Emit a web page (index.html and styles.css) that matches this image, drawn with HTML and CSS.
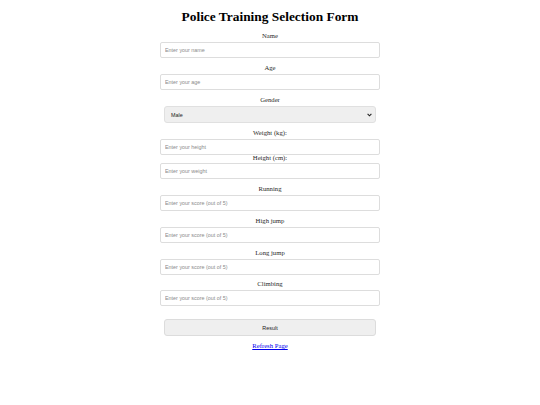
FILE: index.html
```html
<!DOCTYPE html>
<html>
<head>
<meta charset="utf-8">
<title>Police Training Selection Form</title>
<link rel="stylesheet" href="styles.css">
</head>
<body>
<h1 class="title">Police Training Selection Form</h1>
<form class="form">
  <div class="field">
    <label class="label">Name</label>
    <input class="input" type="text" placeholder="Enter your name">
  </div>
  <div class="field">
    <label class="label">Age</label>
    <input class="input" type="text" placeholder="Enter your age">
  </div>
  <div class="field">
    <label class="label">Gender</label>
    <div class="select">
      <span class="select-text">Male</span>
      <svg class="chev" width="5" height="4" viewBox="0 0 5 4"><path d="M0.6 0.8 L2.5 2.8 L4.4 0.8" fill="none" stroke="#222" stroke-width="1.1"/></svg>
    </div>
  </div>
  <div class="field">
    <label class="label">Weight (kg):</label>
    <input class="input" type="text" placeholder="Enter your height">
    <label class="label label-tight">Height (cm):</label>
    <input class="input" type="text" placeholder="Enter your weight">
  </div>
  <div class="field">
    <label class="label">Running</label>
    <input class="input" type="text" placeholder="Enter your score (out of 5)">
  </div>
  <div class="field">
    <label class="label">High jump</label>
    <input class="input" type="text" placeholder="Enter your score (out of 5)">
  </div>
  <div class="field field-short">
    <label class="label">Long jump</label>
    <input class="input" type="text" placeholder="Enter your score (out of 5)">
  </div>
  <div class="field">
    <label class="label">Climbing</label>
    <input class="input" type="text" placeholder="Enter your score (out of 5)">
  </div>
  <div class="button">Result</div>
  <div class="refresh"><a href="#" class="link">Refresh Page</a></div>
</form>
</body>
</html>
```
FILE: styles.css
```css
html, body {
  margin: 0;
  padding: 0;
  background: #ffffff;
}
body {
  font-family: "Liberation Serif", "Times New Roman", serif;
  font-size: 6.7px;
  color: #000;
}
.title {
  margin: 0;
  padding-top: 9px;
  height: 22px;
  line-height: 16px;
  font-size: 13.4px;
  font-weight: bold;
  text-align: center;
}
.form {
  width: 220px;
  margin: 0 auto;
  display: flex;
  flex-direction: column;
}
.field {
  display: flex;
  flex-direction: column;
  margin-bottom: 5px;
}
.field-short {
  margin-bottom: 4px;
}
.label {
  display: block;
  height: 10px;
  line-height: 10px;
  margin-bottom: 1px;
  text-align: center;
  font-weight: normal;
  color: #2a2a2a;
}
.label-tight {
  height: 8px;
  line-height: 7px;
  margin-top: -1px;
}
.input {
  display: block;
  box-sizing: border-box;
  width: 220px;
  height: 16px;
  margin: 0;
  padding: 0 4px;
  border: 1px solid #dddddd;
  border-radius: 2px;
  background: #fff;
  font-family: "Liberation Sans", Arial, sans-serif;
  font-size: 5.4px;
  color: #000;
  outline: none;
}
.input::placeholder {
  color: #8a8a8a;
}
.select {
  box-sizing: border-box;
  margin: 0 4px;
  height: 17px;
  border: 1px solid #e0e0e0;
  border-radius: 3px;
  background: #efefef;
  display: flex;
  align-items: center;
  justify-content: space-between;
  padding: 0 3px 0 6px;
  font-family: "Liberation Sans", Arial, sans-serif;
  font-size: 5.4px;
  color: #222;
}
.chev {
  display: block;
}
.button {
  box-sizing: border-box;
  margin: 8px 4px 0;
  height: 17px;
  border: 1px solid #dcdcdc;
  border-radius: 3px;
  background: #efefef;
  display: flex;
  align-items: center;
  justify-content: center;
  font-family: "Liberation Sans", Arial, sans-serif;
  font-size: 5.4px;
  color: #222;
}
.refresh {
  text-align: center;
  margin-top: 5px;
  line-height: 10px;
}
.link {
  color: #0000ee;
  text-decoration: underline;
}
```
